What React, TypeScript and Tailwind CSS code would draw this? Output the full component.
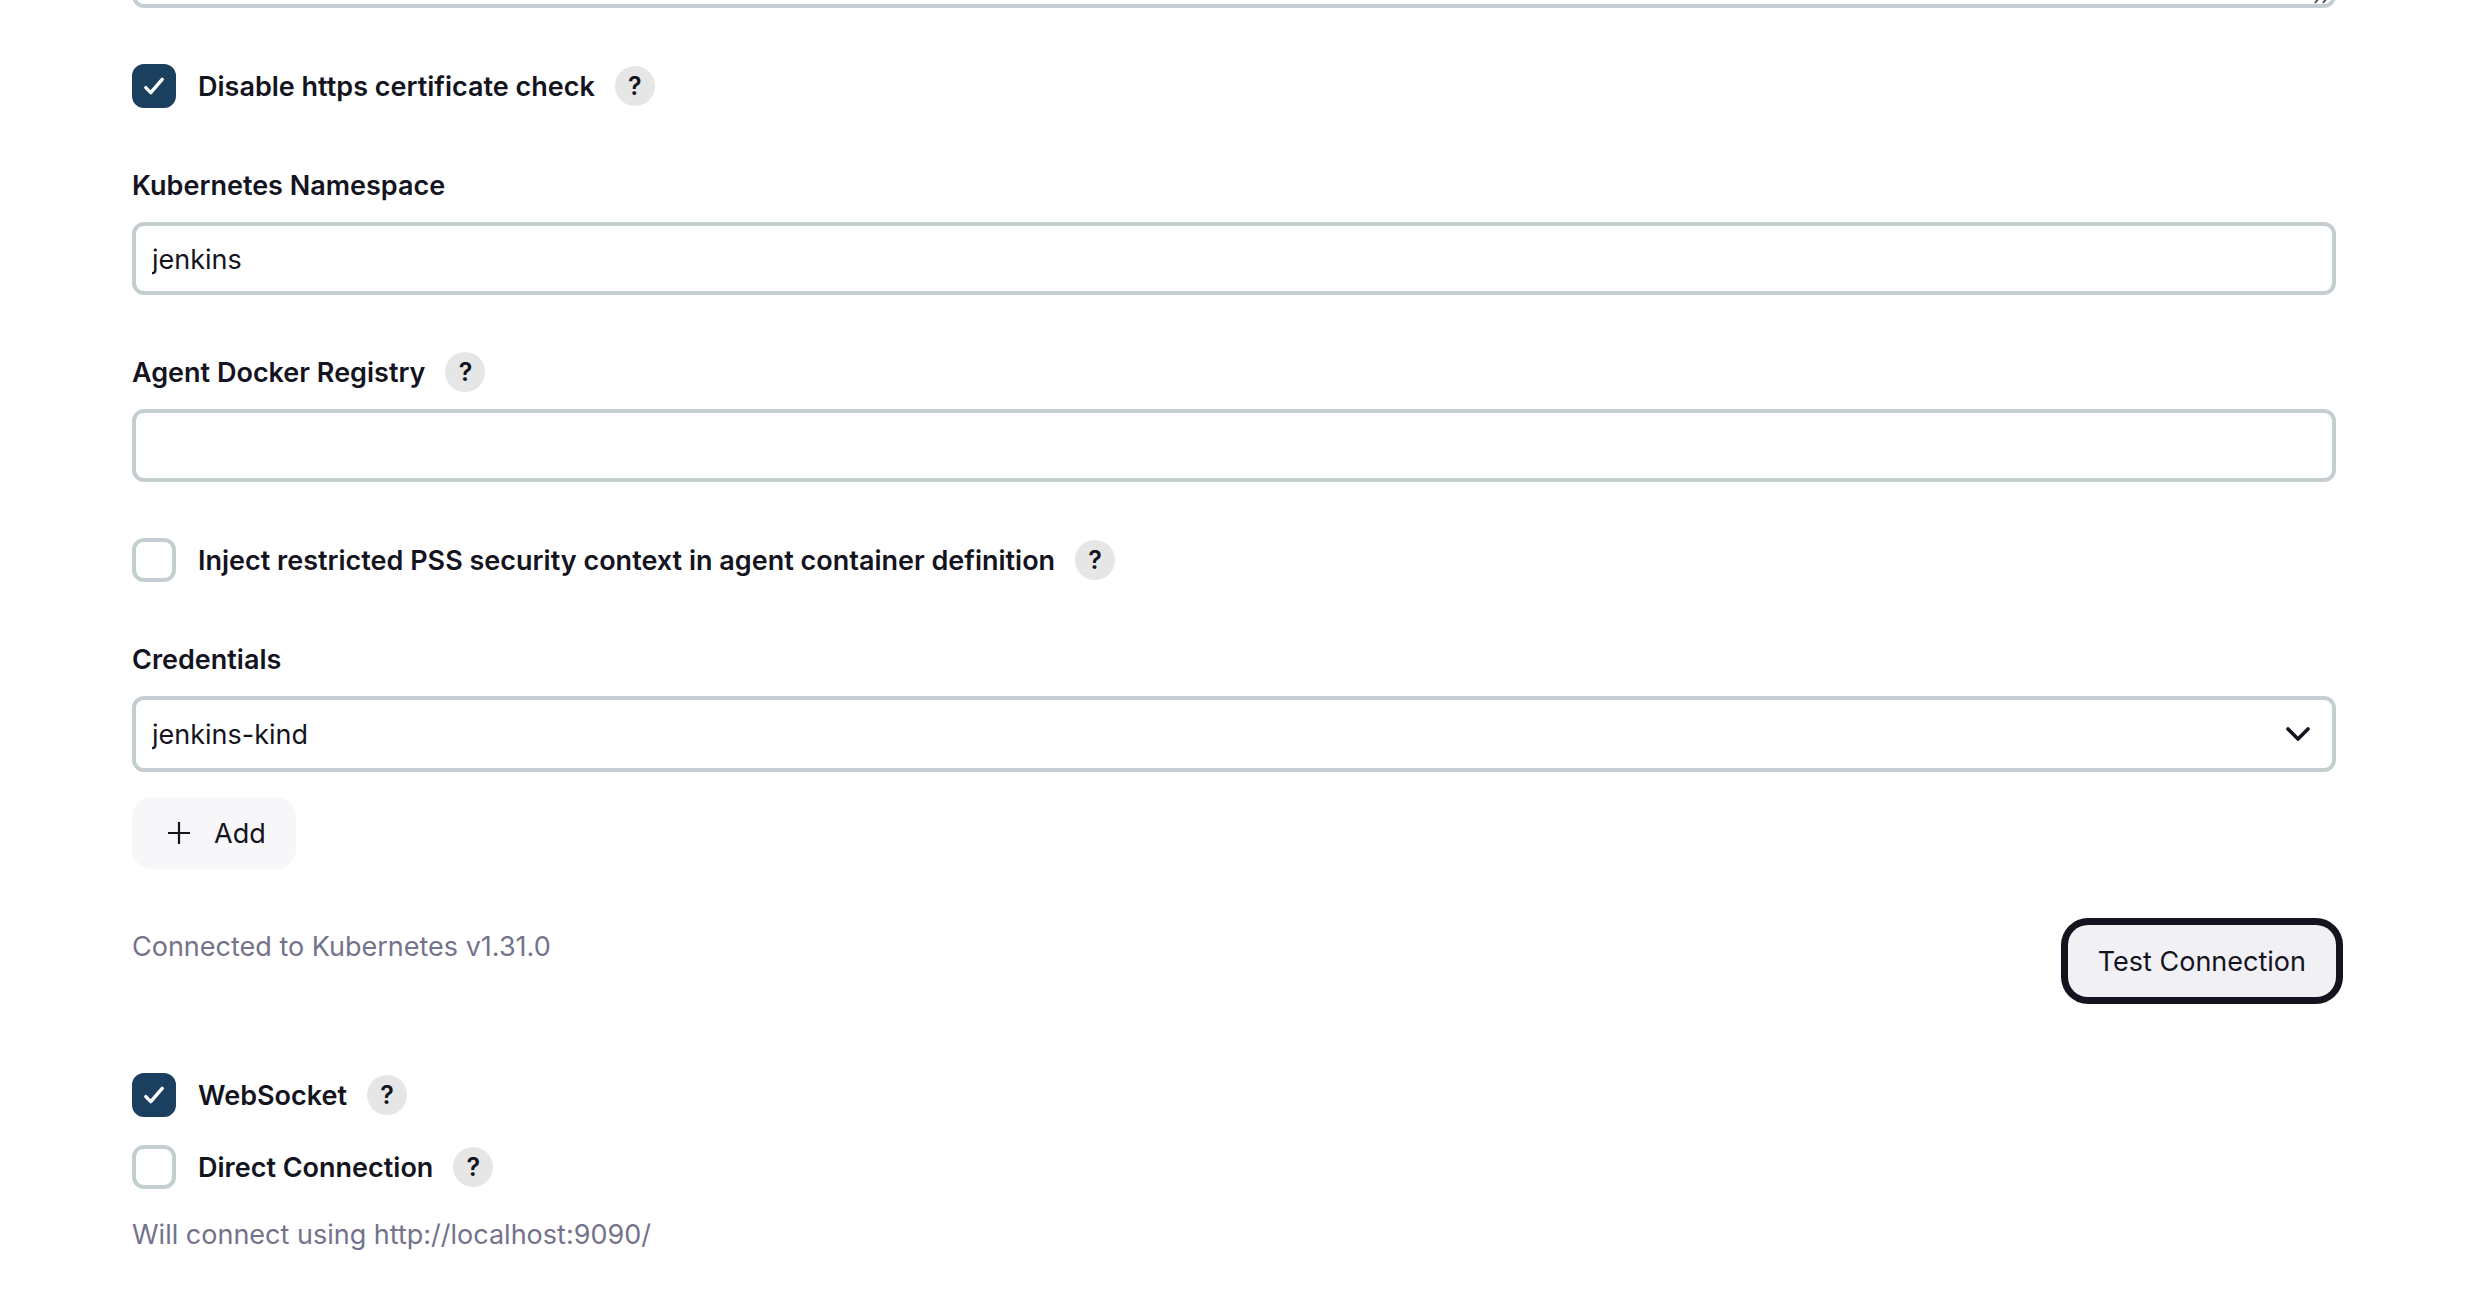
import React, { useState } from "react";

const HelpButton = ({ topic }: { topic: string }) => (
  <button
    type="button"
    aria-label={`Help for feature: ${topic}`}
    className="size-10 shrink-0 rounded-full bg-[#e6e6e6] text-[25px] leading-10 font-semibold text-center"
  >
    ?
  </button>
);

type CheckboxProps = {
  id: string;
  label: string;
  defaultChecked?: boolean;
};

const Checkbox = ({ id, label, defaultChecked }: CheckboxProps) => (
  <div className="flex items-center gap-5">
    <label
      htmlFor={id}
      className="flex items-center gap-[22px] text-[27px] leading-[42px] font-semibold"
    >
      <span className="relative size-11 shrink-0">
        <input
          id={id}
          type="checkbox"
          defaultChecked={defaultChecked}
          className="peer block size-11 appearance-none rounded-xl border-4 border-[#c4cdd0] bg-white checked:border-[#1a3f5f] checked:bg-[#1a3f5f]"
        />
        <svg
          viewBox="0 0 44 44"
          fill="none"
          className="pointer-events-none absolute inset-0 hidden size-11 peer-checked:block"
        >
          <path
            d="M13.8 23.6l5 5L30.2 15.4"
            stroke="#fff"
            strokeWidth="3.4"
            strokeLinecap="round"
            strokeLinejoin="round"
          />
        </svg>
      </span>
      <span className="pt-0.5">{label}</span>
    </label>
    <HelpButton topic={label} />
  </div>
);

type FieldProps = {
  id: string;
  label: string;
  help?: boolean;
  children: React.ReactNode;
};

const Field = ({ id, label, help, children }: FieldProps) => (
  <div className="mt-[57px] flex flex-col gap-[17px]">
    <div className="flex items-center gap-5">
      <label
        htmlFor={id}
        className="pt-0.5 text-[27px] leading-[38px] font-semibold"
      >
        {label}
      </label>
      {help && <HelpButton topic={label} />}
    </div>
    {children}
  </div>
);

const App = () => {
  const [namespace, setNamespace] = useState("jenkins");
  const [registry, setRegistry] = useState("");

  return (
    <form className="flex w-full flex-col overflow-hidden bg-white pr-[150px] pb-10 pl-[132px] font-['Inter',sans-serif] text-[27px] text-[#14141f]">
      {/* certificate key, scrolled almost out of view */}
      <div className="relative -mt-[100px]">
        <textarea
          aria-label="Kubernetes server certificate key"
          className="block h-[108px] w-full resize-none rounded-xl border-4 border-[#c4cdd0] bg-white"
        />
        <svg
          viewBox="0 0 24 24"
          className="pointer-events-none absolute right-1 bottom-1 size-6"
          stroke="#555"
          strokeWidth="2"
        >
          <path d="M7 23L23 3M15 23L23 13" />
        </svg>
      </div>

      <div className="mt-14">
        <Checkbox
          id="skipTls"
          label="Disable https certificate check"
          defaultChecked
        />
      </div>

      <Field id="namespace" label="Kubernetes Namespace">
        <input
          id="namespace"
          type="text"
          value={namespace}
          onChange={(e) => setNamespace(e.target.value)}
          className="h-[73px] w-full rounded-xl border-4 border-[#c4cdd0] bg-white px-4 pt-0.5"
        />
      </Field>

      <Field id="registry" label="Agent Docker Registry" help>
        <input
          id="registry"
          type="text"
          value={registry}
          onChange={(e) => setRegistry(e.target.value)}
          className="h-[73px] w-full rounded-xl border-4 border-[#c4cdd0] bg-white px-4 pt-0.5"
        />
      </Field>

      <div className="mt-14">
        <Checkbox
          id="restrictedPss"
          label="Inject restricted PSS security context in agent container definition"
        />
      </div>

      <Field id="credentials" label="Credentials">
        <div className="relative">
          <select
            id="credentials"
            className="block h-[76px] w-full appearance-none rounded-xl border-4 border-[#c4cdd0] bg-white pt-0.5 pr-20 pl-4"
          >
            <option>jenkins-kind</option>
          </select>
          <svg
            viewBox="0 0 28 28"
            fill="none"
            className="pointer-events-none absolute top-6 right-6 size-7"
          >
            <path
              d="M4 9l10 10L24 9"
              stroke="#14141f"
              strokeWidth="3.6"
              strokeLinecap="round"
              strokeLinejoin="round"
            />
          </svg>
        </div>
      </Field>

      <button
        type="button"
        className="mt-[25px] flex h-[72px] items-center gap-6 self-start rounded-[20px] bg-[#f7f7f9] pr-[30px] pl-9"
      >
        <svg viewBox="0 0 22 22" className="size-[22px]">
          <path
            d="M11 0v22M0 11h22"
            stroke="#14141f"
            strokeWidth="2.2"
          />
        </svg>
        <span className="pt-0.5">Add</span>
      </button>

      <div className="mt-14 flex items-start justify-between">
        <p className="leading-[43px] text-[#73738c]">
          Connected to Kubernetes v1.31.0
        </p>
        <button
          type="button"
          className="h-[72px] rounded-[20px] bg-[#f1f0f5] px-[30px] pt-0.5 ring-[7px] ring-[#14141f]"
        >
          Test Connection
        </button>
      </div>

      <div className="mt-[76px] flex flex-col gap-7">
        <Checkbox id="webSocket" label="WebSocket" defaultChecked />
        <Checkbox id="directConnection" label="Direct Connection" />
      </div>

      <p className="mt-6 leading-[43px] text-[#73738c]">
        Will connect using http://localhost:9090/
      </p>
    </form>
  );
};

export default App;
